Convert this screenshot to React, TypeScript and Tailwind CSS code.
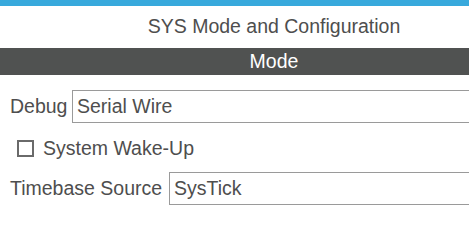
import React from 'react';

export default function App() {
  return (
    <div className="w-[469px] h-[241px] overflow-hidden bg-white font-['Liberation_Sans',Arial,sans-serif] text-[19.5px] text-[#4e4e4e]">
      <div className="h-[6px] bg-[#38a9dc]" />
      <div className="w-[548px]">
        <div className="h-[42px] flex items-center justify-center leading-none">
          SYS Mode and Configuration
        </div>
        <div className="h-[27px] bg-[#505251] text-white flex items-center justify-center leading-none">
          Mode
        </div>

        <div className="pl-[10px] pt-[15px]">
          <div className="flex items-center">
            <span className="w-[62px] shrink-0 whitespace-nowrap">Debug</span>
            <div className="flex-1 h-[33px] border border-[#9a9a9a] flex items-center pl-[4px]">
              Serial Wire
            </div>
          </div>

          <label className="flex items-center pl-[7px] mt-[17px] h-[17px]">
            <span className="block shrink-0 w-[17px] h-[17px] border-2 border-[#6a6a6a] bg-white" />
            <span className="ml-[9px]">System Wake-Up</span>
          </label>

          <div className="flex items-center mt-[15px]">
            <span className="w-[159px] shrink-0 whitespace-nowrap">Timebase Source</span>
            <div className="flex-1 h-[33px] border border-[#9a9a9a] flex items-center pl-[4px]">
              SysTick
            </div>
          </div>
        </div>
      </div>
    </div>
  );
}
